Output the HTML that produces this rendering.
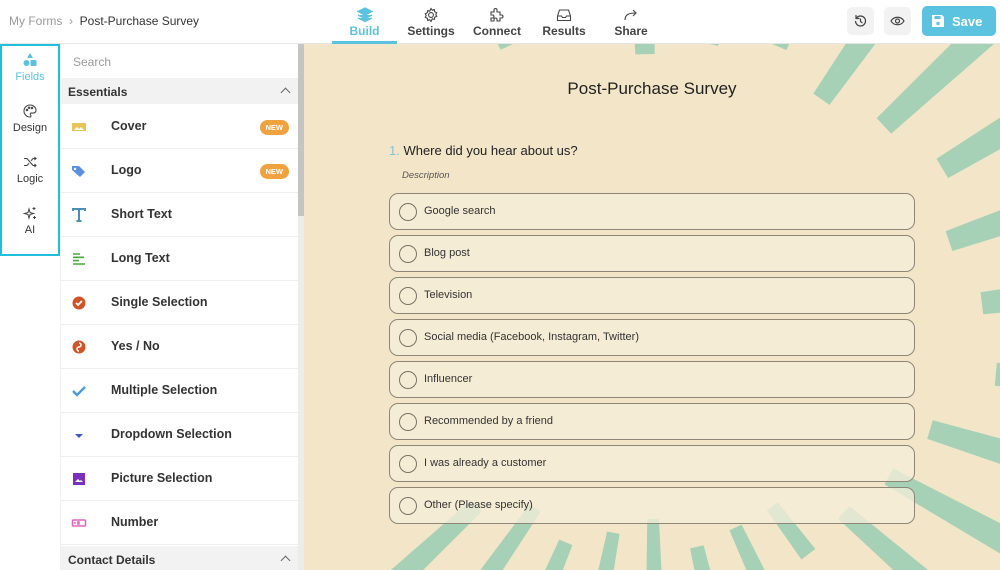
<!DOCTYPE html>
<html><head><meta charset="utf-8"><style>
*{box-sizing:border-box;margin:0;padding:0}
html,body{width:1000px;height:570px;overflow:hidden}
body{font-family:"Liberation Sans",sans-serif;background:#fff;position:relative;color:#333}
.hdr{position:absolute;left:0;top:0;width:1000px;height:44px;background:#fff;border-bottom:1px solid #e6e6e6;z-index:5}
.crumb{position:absolute;left:9px;top:14px;font-size:12px;color:#999}
.crumb b{font-weight:normal;color:#333}
.tab{position:absolute;top:0;height:44px;text-align:center;font-size:12px;color:#444;font-weight:bold}
.tab svg{display:block;margin:7px auto 1px}
.tab.act{color:#5bc3df;border-bottom:3px solid #5bc3df}
.ib{position:absolute;top:7px;width:27px;height:28px;background:#f2f2f2;border-radius:5px}
.save{position:absolute;left:922px;top:6px;width:74px;height:30px;background:#5bc3df;border-radius:5px;color:#fff;font-weight:bold;font-size:13px;padding:8px 0 0 30px}
.nav{position:absolute;left:0;top:44px;width:60px;height:212px;border:2px solid #1ec0dc}
.ni{position:absolute;width:56px;text-align:center;font-size:11px;color:#333}
.ni svg{display:block;margin:0 auto 4px}
.panel{position:absolute;left:60px;top:44px;width:238px;height:526px;background:#fff;border-left:1px solid #eee;overflow:hidden}
.sb{position:absolute;left:298px;top:44px;width:6px;height:526px;background:#ececec}
.sb div{width:6px;height:172px;background:#c4c4c4}
.srch{position:absolute;left:12px;top:11px;font-size:12px;color:#999}
.sec{position:absolute;left:0;width:238px;height:26px;background:#f2f2f2;font-size:12px;font-weight:bold;color:#333;padding:7px 0 0 7px}
.sec:after{content:"";position:absolute;right:10px;top:11px;width:6px;height:6px;border-left:1px solid #666;border-top:1px solid #666;transform:rotate(45deg)}
.row{position:absolute;left:0;width:238px;height:44px;border-bottom:1px solid #eee;font-size:12.5px;font-weight:bold;color:#333}
.row span.t{position:absolute;left:50px;top:14px}
.row .ic{position:absolute;left:10px;top:14px;width:16px;height:16px}
.new{position:absolute;right:10px;top:15px;background:#f0a23e;color:#fff;font-size:7.5px;font-weight:bold;border-radius:8px;padding:3px 6px}
.canvas{position:absolute;left:304px;top:44px;width:696px;height:526px;background:#f3e6c8;overflow:hidden}
.title{position:absolute;left:0;width:696px;top:35px;text-align:center;font-size:17px;color:#222}
.q{position:absolute;left:85px;top:99px;font-size:13px;color:#222}
.q i{font-style:normal;color:#7fc6d8}
.desc{position:absolute;left:98px;top:126px;font-size:9.5px;font-style:italic;color:#555}
.opt{position:absolute;left:85px;width:526px;height:37px;border:1.3px solid #8e8778;border-radius:9px;background:rgba(246,238,218,.75);font-size:11px;color:#333}
.opt:before{content:"";position:absolute;left:9px;top:9px;width:16px;height:16px;border:1.2px solid #7a7466;border-radius:50%}
.opt span{position:absolute;left:34px;top:11px}
</style></head><body>
<div class="hdr">
 <div class="crumb">My Forms &nbsp;›&nbsp; <b>Post-Purchase Survey</b></div>
 <div class="tab act" style="left:332px;width:65px"><svg width="16" height="16" viewBox="0 0 16 16"><path d="M8 1L15 4.5 8 8 1 4.5z M1 8l7 3.5L15 8M1 11l7 3.5 7-3.5" fill="#5bc3df" stroke="#5bc3df" stroke-width="1.3"/></svg>Build</div>
 <div class="tab" style="left:400px;width:62px"><svg width="16" height="16" viewBox="0 0 16 16" fill="none" stroke="#444" stroke-width="1.1"><circle cx="8" cy="8" r="2.4"/><path d="M8 1.5l1.3 1.7 2-.6.4 2.1 2 .9-.9 1.9.9 1.9-2 .9-.4 2.1-2-.6L8 14.5l-1.3-1.7-2 .6-.4-2.1-2-.9.9-1.9-.9-1.9 2-.9.4-2.1 2 .6z"/></svg>Settings</div>
 <div class="tab" style="left:466px;width:62px"><svg width="16" height="16" viewBox="0 0 16 16" fill="none" stroke="#444" stroke-width="1.1"><path d="M2 5h3V3a1.5 1.5 0 013 0v2h3v3h1.5a1.5 1.5 0 010 3H11v3H8v-1.5a1.5 1.5 0 00-3 0V14H2v-3h1.5a1.5 1.5 0 000-3H2z"/></svg>Connect</div>
 <div class="tab" style="left:533px;width:62px"><svg width="16" height="16" viewBox="0 0 16 16" fill="none" stroke="#444" stroke-width="1.1"><path d="M1.5 9l2-6h9l2 6v4.5h-13zM1.5 9h4l1 1.5h3l1-1.5h4"/></svg>Results</div>
 <div class="tab" style="left:600px;width:62px"><svg width="16" height="16" viewBox="0 0 16 16" fill="none" stroke="#444" stroke-width="1.1"><path d="M2 13c0-5 3-7 11-7M10 3l3 3-3 3"/></svg>Share</div>
 <div class="ib" style="left:847px"><svg width="27" height="28" viewBox="0 0 27 28" fill="none" stroke="#444" stroke-width="1.2"><path d="M8.5 14a5 5 0 105-5 5 5 0 00-4 2M9 8v3.5h3.5M13.5 11.5v3l2 1.5"/></svg></div>
 <div class="ib" style="left:884px"><svg width="27" height="28" viewBox="0 0 27 28" fill="none" stroke="#444" stroke-width="1.2"><path d="M7 14c3-5 10-5 13 0-3 5-10 5-13 0z"/><circle cx="13.5" cy="14" r="2"/></svg></div>
 <div class="save"><svg style="position:absolute;left:9px;top:8px" width="14" height="14" viewBox="0 0 14 14"><path d="M1 1h10l2 2v10H1z" fill="#fff"/><rect x="3.5" y="2" width="6" height="3" fill="#5bc3df"/><circle cx="7" cy="9.5" r="1.7" fill="#5bc3df"/></svg>Save</div>
</div>
<div class="nav">
 <div class="ni" style="top:7px;color:#5bc3df"><svg width="14" height="14" viewBox="0 0 14 14" fill="#5bc3df"><path d="M7 0l3 5H4z"/><circle cx="3.5" cy="10" r="3"/><rect x="7.5" y="7" width="6" height="6" rx="1"/></svg>Fields</div>
 <div class="ni" style="top:58px"><svg width="14" height="14" viewBox="0 0 14 14" fill="none" stroke="#444" stroke-width="1.1"><path d="M7 1a6 6 0 000 12c1.2 0 1-1.5.5-2.3-.6-1 .2-1.9 1.3-1.7C11 9.4 13 8.5 13 6.3 13 3.3 10.3 1 7 1z"/><circle cx="4" cy="6" r=".7"/><circle cx="6" cy="3.8" r=".7"/><circle cx="9" cy="4" r=".7"/></svg>Design</div>
 <div class="ni" style="top:109px"><svg width="14" height="14" viewBox="0 0 14 14" fill="none" stroke="#444" stroke-width="1.1"><path d="M1 3.5h3l6 7h3M1 10.5h3l2-2.3M8 5.8l2-2.3h3M11.5 2l1.5 1.5-1.5 1.5M11.5 9l1.5 1.5-1.5 1.5"/></svg>Logic</div>
 <div class="ni" style="top:160px"><svg width="14" height="14" viewBox="0 0 14 14" fill="none" stroke="#444" stroke-width="1"><path d="M6 3l1 3.5 3.5 1-3.5 1L6 12l-1-3.5-3.5-1 3.5-1z M11 1v3M9.5 2.5h3M11.5 10v3M10 11.5h3"/></svg>AI</div>
</div>
<div class="panel">
 <div class="srch">Search</div>
 <div class="sec" style="top:34px">Essentials</div>
 <div class="row" style="top:61px"><svg class="ic" viewBox="0 0 16 16"><rect x="1" y="4" width="14" height="8" fill="#e9c45a"/><path d="M3 11l3-3 2 2 2-2 3 3z" fill="#fff"/></svg><span class="t">Cover</span><span class="new">NEW</span></div>
 <div class="row" style="top:105px"><svg class="ic" viewBox="0 0 16 16"><path d="M1 3h7l6 6-5 5-8-7z" fill="#5a8fe0"/><circle cx="4" cy="6" r="1.2" fill="#fff"/></svg><span class="t">Logo</span><span class="new">NEW</span></div>
 <div class="row" style="top:149px"><svg class="ic" viewBox="0 0 16 16" fill="none" stroke="#4a8fb5" stroke-width="2"><path d="M2 4V2h12v2M8 2v12M5.5 14h5"/></svg><span class="t">Short Text</span></div>
 <div class="row" style="top:193px"><svg class="ic" viewBox="0 0 16 16" stroke="#4aa83c" stroke-width="1.6"><path d="M2 3h7M2 6.3h11M2 9.6h6M2 13h12"/></svg><span class="t">Long Text</span></div>
 <div class="row" style="top:237px"><svg class="ic" viewBox="0 0 16 16"><circle cx="8" cy="8" r="6.5" fill="#cf5426"/><path d="M5 8l2 2 4-4" stroke="#fff" stroke-width="1.7" fill="none"/></svg><span class="t">Single Selection</span></div>
 <div class="row" style="top:281px"><svg class="ic" viewBox="0 0 16 16"><circle cx="8" cy="8" r="6.5" fill="#cf5426"/><path d="M8 4a2 2 0 010 4 2 2 0 000 4" stroke="#fff" stroke-width="1.5" fill="none"/></svg><span class="t">Yes / No</span></div>
 <div class="row" style="top:325px"><svg class="ic" viewBox="0 0 16 16"><path d="M2 8l4 4 8-8" stroke="#4a9be0" stroke-width="2.4" fill="none"/></svg><span class="t">Multiple Selection</span></div>
 <div class="row" style="top:369px"><svg class="ic" viewBox="0 0 16 16"><path d="M4 7h8l-4 4z" fill="#3e56c9"/></svg><span class="t">Dropdown Selection</span></div>
 <div class="row" style="top:413px"><svg class="ic" viewBox="0 0 16 16"><rect x="2" y="2" width="12" height="12" fill="#7c2fbd"/><path d="M4 11l3-3 2 2 1-1 2 2z" fill="#fff"/></svg><span class="t">Picture Selection</span></div>
 <div class="row" style="top:457px"><svg class="ic" viewBox="0 0 16 16" fill="none" stroke="#e062c2" stroke-width="1.5"><rect x="1.5" y="5" width="13" height="6" rx="1"/><path d="M4 7v2M6 7h2v2H6"/></svg><span class="t">Number</span></div>
 <div class="sec" style="top:502px;height:24px">Contact Details</div>
</div>
<div class="sb"><div></div></div>
<div class="canvas">
 <svg id="rays" width="696" height="526" style="position:absolute;left:0;top:0"></svg>
 <div class="title">Post-Purchase Survey</div>
 <div class="q"><i>1.</i> Where did you hear about us?</div>
 <div class="desc">Description</div>
 <div class="opt" style="top:149px"><span>Google search</span></div>
 <div class="opt" style="top:191px"><span>Blog post</span></div>
 <div class="opt" style="top:233px"><span>Television</span></div>
 <div class="opt" style="top:275px"><span>Social media (Facebook, Instagram, Twitter)</span></div>
 <div class="opt" style="top:317px"><span>Influencer</span></div>
 <div class="opt" style="top:359px"><span>Recommended by a friend</span></div>
 <div class="opt" style="top:401px"><span>I was already a customer</span></div>
 <div class="opt" style="top:443px"><span>Other (Please specify)</span></div>
</div>
<script>
(function(){var s=document.getElementById('rays'),cx=346,cy=300,h='';
for(var i=0;i<30;i++){var deg=i*12+5;
if(deg>140&&deg<236)continue;
var a=deg*Math.PI/180,c=Math.cos(a),sn=Math.sin(a);
var b=sn<0?300:185,ax=330;
var r1=1/Math.sqrt((c*c)/(ax*ax)+(sn*sn)/(b*b));
r1+= (i%3==0?20:(i%3==1?-10:5));
var r2=r1+(i%4==0?60:600);
if(deg>=236&&deg<265){r1=330;r2=r1+25;}
var hw=1.9*Math.PI/180;
var pts=[[r1,a-hw],[r2,a-hw],[r2,a+hw],[r1,a+hw]].map(function(q){return (cx+q[0]*Math.cos(q[1])).toFixed(1)+','+(cy+q[0]*Math.sin(q[1])).toFixed(1)}).join(' ');
h+='<polygon fill="#a6d1b7" points="'+pts+'"/>';}
s.innerHTML=h;})();
</script>
</body></html>
